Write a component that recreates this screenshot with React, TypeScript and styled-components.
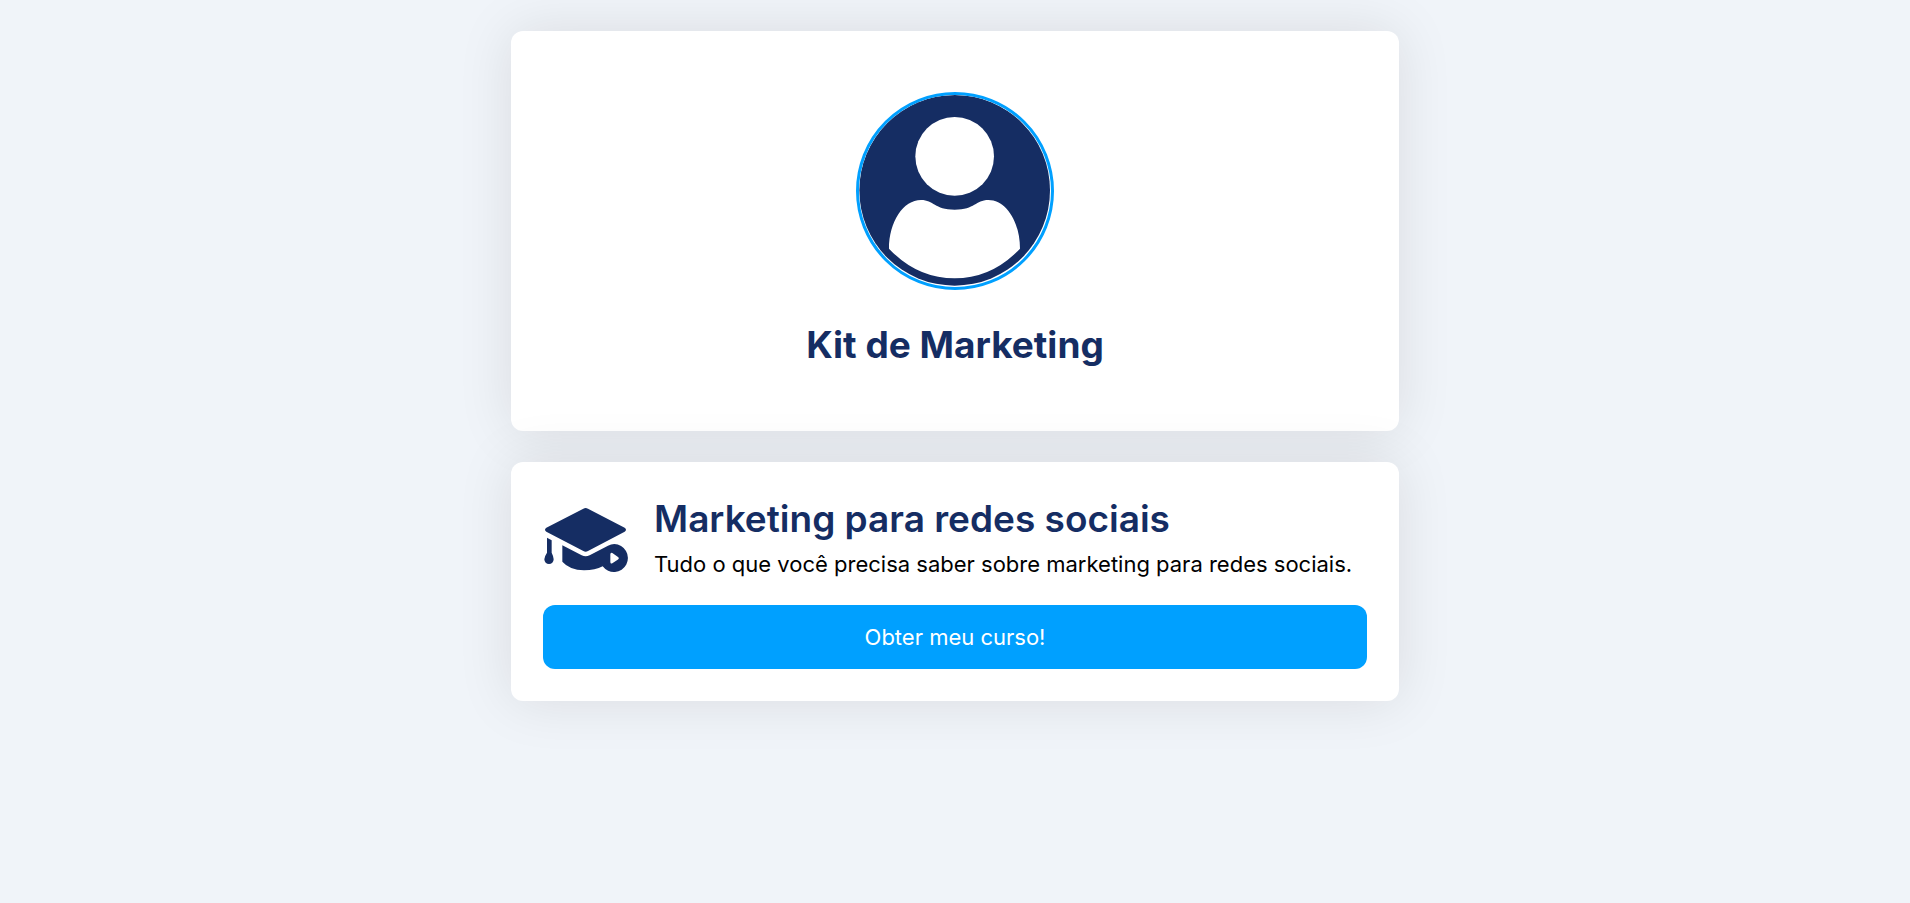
import React from "react";
import styled, { createGlobalStyle } from "styled-components";

const navy = "#152d63";
const blue = "#00a0ff";

const GlobalStyle = createGlobalStyle`
  *, *::before, *::after { box-sizing: border-box; }
  body {
    margin: 0;
    background: #f0f4f9;
    font-family: Inter, "Liberation Sans", sans-serif;
    color: #000;
  }
`;

const Page = styled.main`
  display: flex;
  flex-direction: column;
  align-items: center;
  gap: 31px;
  min-height: 100vh;
  padding: 31px 16px;
`;

const Card = styled.section`
  width: 100%;
  max-width: 888px;
  padding: 32px;
  border-radius: 12px;
  background: #fff;
  box-shadow: 0 0 56px rgba(30, 15, 0, 0.1);
`;

const ProfileCard = styled(Card)`
  display: flex;
  flex-direction: column;
  align-items: center;
  gap: 31px;
  padding: 61px 32px 62px;
`;

const Avatar = styled.svg`
  display: block;
  width: 198px;
  height: 198px;
  border: 3px solid ${blue};
  border-radius: 50%;
`;

const Name = styled.h1`
  margin: 0;
  color: ${navy};
  font-size: 37px;
  font-weight: 700;
  line-height: 48px;
`;

const CourseCard = styled(Card)`
  display: flex;
  flex-direction: column;
  gap: 23px;
`;

const Course = styled.div`
  display: flex;
  align-items: flex-start;
  gap: 23px;
`;

const CapIcon = styled.svg`
  flex: none;
  width: 88px;
  height: 88px;
`;

const CourseTitle = styled.h2`
  margin: 0;
  color: ${navy};
  font-size: 37px;
  font-weight: 600;
  line-height: 50px;
`;

const CourseText = styled.p`
  margin: 6px 0 0;
  font-size: 22px;
  line-height: 28px;
`;

const ActionButton = styled.button`
  width: 100%;
  height: 64px;
  border: 0;
  border-radius: 12px;
  background: ${blue};
  color: #fff;
  font-family: inherit;
  font-size: 22px;
  font-weight: 400;
  cursor: pointer;
`;

export default function App() {
  return (
    <>
      <GlobalStyle />
      <Page>
        <ProfileCard>
          <Avatar viewBox="57 45 576 576" role="img" aria-label="Perfil">
            <circle cx="344" cy="331" r="286" fill={navy} />
            <circle cx="344" cy="229" r="118" fill="#fff" />
            <path
              fill="#fff"
              d="M147 506C147 425 190 360 243 360C282 360 282 389 344 389C406 389 406 360 445 360C498 360 540 425 540 506Q456 595 344 595Q231 595 147 506Z"
            />
          </Avatar>
          <Name>Kit de Marketing</Name>
        </ProfileCard>
        <CourseCard>
          <Course>
            <CapIcon viewBox="39 12 264 264" fill={navy} aria-hidden="true">
              <path d="M160 56Q167 52 174 56L284 113Q292 119 284 125L174 183Q167 187 160 183L49 125Q41 119 49 113Z" />
              <path d="M51 143L65 151V188Q71 200 71 208A14 14 0 0 1 43 208Q43 200 51 188Z" />
              <path d="M97 166L155 196Q167 202 179 196L234 167Q243 162 253 162A42 42 0 1 1 218 229Q196 241 162 241Q119 240 97 215Z" />
              <path
                fill="#fff"
                d="M241 193Q241 187 247 189L263 200Q270 204 263 209L247 220Q241 222 241 216Z"
              />
            </CapIcon>
            <div>
              <CourseTitle>Marketing para redes sociais</CourseTitle>
              <CourseText>
                Tudo o que você precisa saber sobre marketing para redes
                sociais.
              </CourseText>
            </div>
          </Course>
          <ActionButton type="button">Obter meu curso!</ActionButton>
        </CourseCard>
      </Page>
    </>
  );
}
